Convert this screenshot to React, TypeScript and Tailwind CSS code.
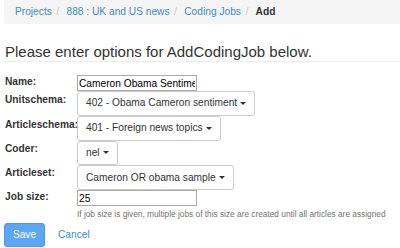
const crumbs = ['Projects', '888 : UK and US news', 'Coding Jobs'];

function Caret() {
  return <span className="ml-[3px] inline-block w-0 h-0 border-t-[3px] border-t-[#333] border-x-[3px] border-x-transparent align-middle" />;
}

function Pick({ label }: { label: string }) {
  return (
    <button className="h-[24.75px] px-[8px] flex items-center border border-[#ccc] rounded-[3px] bg-white text-[#333] text-[10.2px] whitespace-nowrap">
      {label}
      <Caret />
    </button>
  );
}

export default function App() {
  return (
    <div className="w-[400px] h-[248px] overflow-hidden bg-white font-['Liberation_Sans',Arial,sans-serif] text-[#333] text-[10.2px] leading-[14px]">
      <div className="pl-[4px]">
        <ol className="flex items-center h-[24px] bg-[#f5f5f5] rounded-bl-[3px] pl-[11px] whitespace-nowrap">
          {crumbs.map((c) => (
            <li key={c} className="flex items-center">
              <a className="text-[#428bca]">{c}</a>
              <span className="px-[4.5px] text-[#ccc]">/{'\u00a0'}</span>
            </li>
          ))}
          <li className="font-bold text-[#333]">Add</li>
        </ol>

        <h1 className="mt-[19px] pb-[1px] border-b border-[#eee] text-[15px] leading-[17px] pl-[1px]">
          Please enter options for AddCodingJob below.
        </h1>

        <form className="mt-[13px] pl-[1px]">
          <div className="grid grid-cols-[72px_1fr] items-start">
            <label className="font-bold">Name:</label>
            <input
              className="w-[120px] h-[16px] border border-[#a9a9a9] px-[1px] text-[10.2px] leading-[14px] text-black outline-none"
              defaultValue="Cameron Obama Sentiment"
            />

            <label className="font-bold pt-[2px]">Unitschema:</label>
            <div className="flex"><Pick label="402 - Obama Cameron sentiment" /></div>

            <label className="font-bold pt-[2px]">Articleschema:</label>
            <div className="flex"><Pick label="401 - Foreign news topics" /></div>

            <label className="font-bold pt-[1px]">Coder:</label>
            <div className="flex"><Pick label="nel" /></div>

            <label className="font-bold pt-[1px]">Articleset:</label>
            <div className="flex"><Pick label="Cameron OR obama sample" /></div>

            <label className="font-bold">Job size:</label>
            <div>
              <input
                className="w-[120px] h-[16px] border border-[#a9a9a9] px-[1px] text-[10.2px] leading-[14px] text-black outline-none"
                defaultValue="25"
              />
              <p className="mt-[3px] text-[8.3px] leading-[10px] text-[#737373] whitespace-nowrap">
                If job size is given, multiple jobs of this size are created until all articles are assigned
              </p>
            </div>
          </div>

          <div className="mt-[4px] -ml-[1px] flex items-center">
            <button className="w-[41px] h-[24px] rounded-[3px] bg-[#5ca6f6] border border-[#4d98ea] text-white text-[10.2px]">
              Save
            </button>
            <a className="ml-[13px] text-[#428bca]">Cancel</a>
          </div>
        </form>
      </div>
    </div>
  );
}
